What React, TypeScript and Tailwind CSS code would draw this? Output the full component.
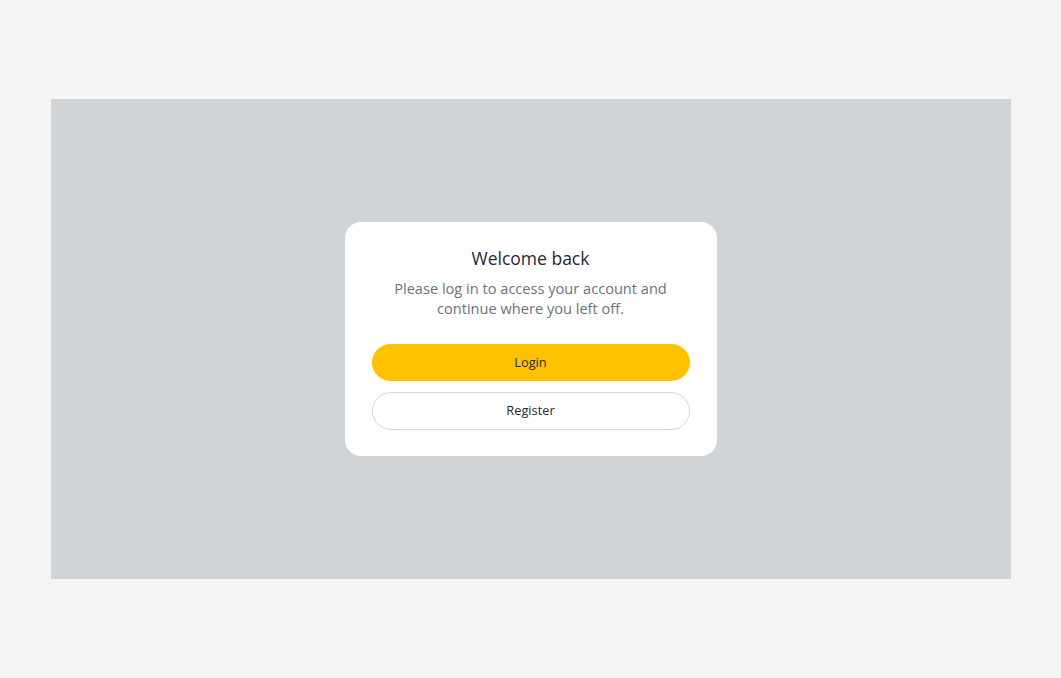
import React from "react";

export default function App() {
  return (
    <div
      className="min-h-screen w-full flex items-center justify-center bg-[#f4f4f4]"
      style={{ fontFamily: '"Open Sans", "Noto Sans", sans-serif' }}
    >
      <div className="w-[960px] h-[480px] bg-[#d1d4d7] flex items-center justify-center">
        <div className="w-[372px] bg-white rounded-2xl px-[27px] pt-[24px] pb-[26px] flex flex-col items-center">
          <h2 className="text-[17.5px] leading-[24px] font-medium text-[#1f2937]">Welcome back</h2>
          <p className="mt-[8px] text-[14.6px] leading-[20px] text-[#6b7280] text-center">
            Please log in to access your account and
            <br />
            continue where you left off.
          </p>
          <button className="mt-[26px] w-full h-[37px] rounded-full bg-[#ffc200] text-[12.8px] font-medium text-[#1f2937] pt-[1px]">
            Login
          </button>
          <button className="mt-[11px] w-full h-[38px] rounded-full bg-white border border-[#d1d5db] text-[12.8px] font-medium text-[#1f2937]">
            Register
          </button>
        </div>
      </div>
    </div>
  );
}
